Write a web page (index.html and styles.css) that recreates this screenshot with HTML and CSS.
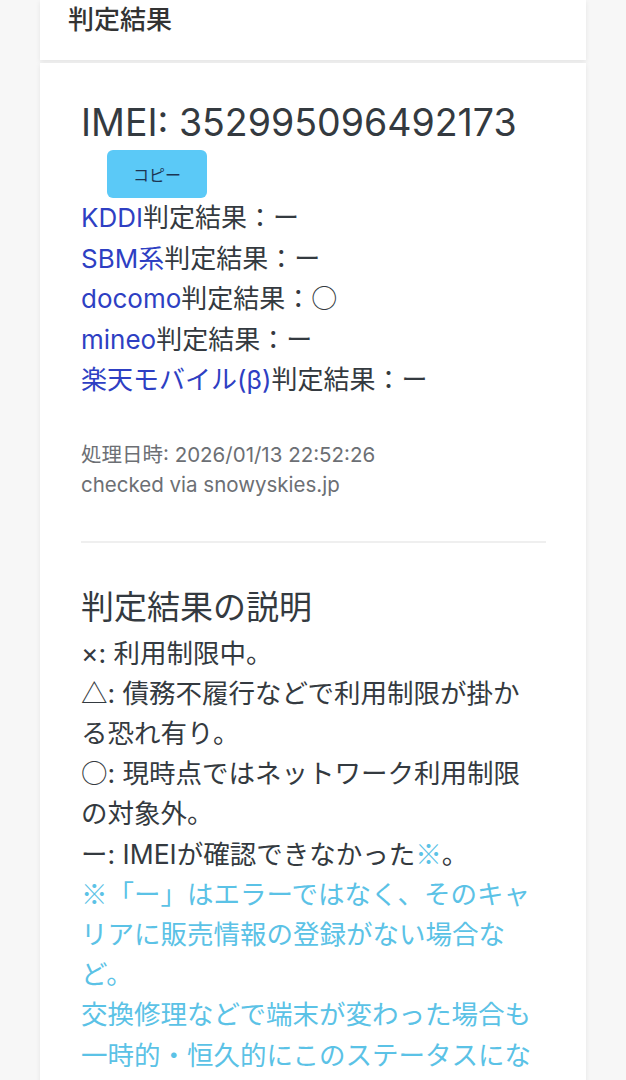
FILE: index.html
```html
<!DOCTYPE html>
<html lang="ja">
<head>
    <meta charset="UTF-8">
    <meta name="viewport" content="width=device-width, initial-scale=1.0">
    <title>判定結果</title>
    <link rel="stylesheet" href="styles.css">
</head>
<body>
    <div class="page">
        <div class="card card-head">
            <h5 class="card-title">判定結果</h5>
        </div>
        <div class="card card-main">
            <h2 class="imei">IMEI: 352995096492173</h2>
            <button class="btn-copy">コピー</button>
            <ul class="results">
                <li><span class="carrier">KDDI</span>判定結果：ー</li>
                <li><span class="carrier">SBM系</span>判定結果：ー</li>
                <li><span class="carrier">docomo</span>判定結果：<span class="sym">○</span></li>
                <li><span class="carrier">mineo</span>判定結果：ー</li>
                <li><span class="carrier">楽天モバイル(β)</span>判定結果：ー</li>
            </ul>
            <div class="meta">
                <p>処理日時: 2026/01/13 22:52:26</p>
                <p>checked via snowyskies.jp</p>
            </div>
            <hr class="divider">
            <h3 class="legend-title">判定結果の説明</h3>
            <div class="legend">
                <p>×: 利用制限中。</p>
                <p><span class="sym">△</span>: 債務不履行などで利用制限が掛かる恐れ有り。</p>
                <p><span class="sym">○</span>: 現時点ではネットワーク利用制限の対象外。</p>
                <p>ー: IMEIが確認できなかった<span class="note sym">※</span>。</p>
                <p class="note"><span class="sym">※</span>「ー」はエラーではなく、そのキャリアに販売情報の登録がない場合など。</p>
                <p class="note">交換修理などで端末が変わった場合も一時的・恒久的にこのステータスになる場合があります。</p>
            </div>
        </div>
    </div>
</body>
</html>
```

FILE: styles.css
```css
body {
    margin: 0;
    background-color: #f7f7f7;
    font-family: Inter, "Noto Sans CJK JP", sans-serif;
    color: #343a40;
}

.page {
    width: 546px;
    margin: 0 auto 0 40px;
}

.card {
    background: white;
    box-shadow: 0 2px 5px rgba(0, 0, 0, 0.08);
}

.card-head {
    height: 60px;
    padding: 0 28px;
    box-sizing: border-box;
}

.card-title {
    margin: 0;
    font-size: 26px;
    font-weight: 500;
    line-height: 40px;
    color: #333;
}

.card-main {
    margin-top: 3px;
    padding: 37px 40px 40px 41px;
}

.imei {
    margin: 0;
    font-size: 37.5px;
    font-weight: 400;
    line-height: 46px;
}

.btn-copy {
    display: block;
    margin: 4px 0 0 26px;
    width: 100px;
    height: 48px;
    border: none;
    border-radius: 6px;
    background-color: #5bc9f7;
    color: #1c3553;
    font-family: inherit;
    font-size: 16px;
}

.results {
    list-style: none;
    margin: 0;
    padding: 0;
    font-size: 26px;
    line-height: 40.5px;
}

.carrier {
    color: #2e3fc3;
}

/* symbols look better in the CJK face */
.sym {
    font-family: "Noto Sans CJK JP", sans-serif;
    line-height: 1;
}

.meta {
    margin-top: 39px;
    font-size: 20.5px;
    line-height: 30.5px;
    color: #6c6f74;
}

.meta p {
    margin: 0;
}

.divider {
    margin: 40px 0 0;
    border: none;
    border-top: 2px solid #efefef;
}

.legend-title {
    margin: 44px 0 0;
    font-size: 33px;
    font-weight: 400;
    line-height: 40px;
}

.legend {
    max-width: 455px;
    margin-top: 6px;
    font-size: 26.5px;
    line-height: 40.2px;
}

.legend p {
    margin: 0;
}

.note {
    color: #5bc2e6;
}
```
